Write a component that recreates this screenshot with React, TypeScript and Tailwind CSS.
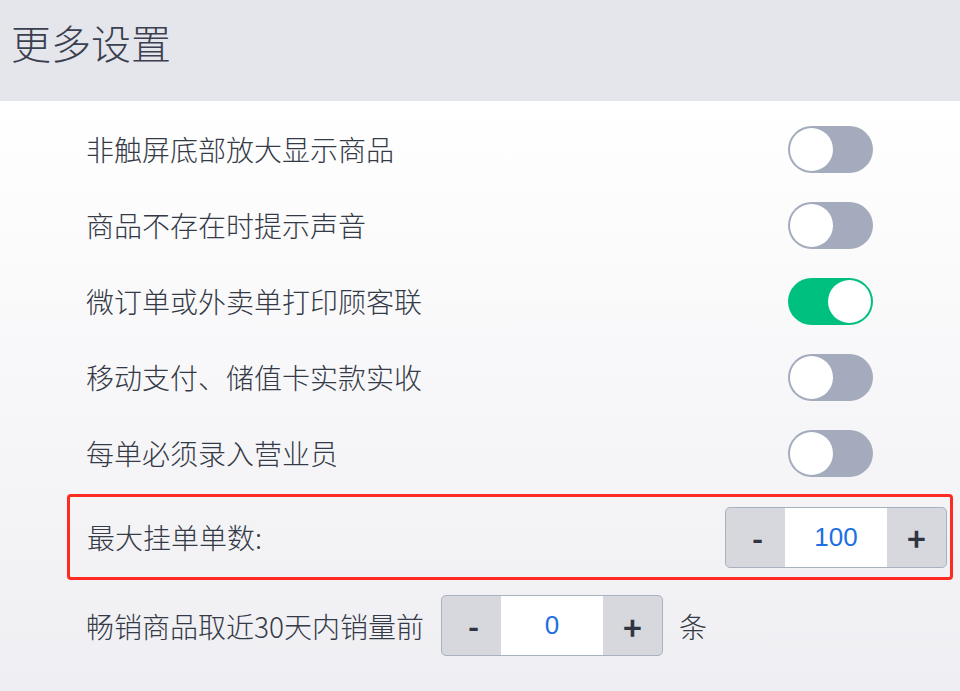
import React, { useState } from "react";

function Toggle({ on }: { on: boolean }) {
  return (
    <div
      className={
        "relative h-[47px] w-[85px] rounded-full " +
        (on ? "bg-[#00c07f]" : "bg-[#a3abbd]")
      }
    >
      <div
        className={
          "absolute top-[2px] h-[43px] w-[43px] rounded-full bg-white " +
          (on ? "left-[40px]" : "left-[2px]")
        }
      />
    </div>
  );
}

function Stepper({ value }: { value: string }) {
  return (
    <div className="flex h-[61px] w-[222px] overflow-hidden rounded-[5px] border border-[#a9b0c0] bg-[#d7d8dd]">
      <div className="flex w-[59px] items-center justify-center pl-[4px] text-[30px] font-semibold text-[#2f3542]">
        -
      </div>
      <div className="flex w-[102px] items-center justify-center bg-white text-[26px] text-[#1d6fe3] [font-family:'Liberation_Sans',sans-serif]">
        {value}
      </div>
      <div className="flex flex-1 items-center justify-center text-[32px] font-bold text-[#2f3542]">
        +
      </div>
    </div>
  );
}

export default function App() {
  const rows: [string, boolean][] = [
    ["非触屏底部放大显示商品", false],
    ["商品不存在时提示声音", false],
    ["微订单或外卖单打印顾客联", true],
    ["移动支付、储值卡实款实收", false],
    ["每单必须录入营业员", false],
  ];
  const [state] = useState(rows);
  return (
    <div className="flex h-[691px] w-[960px] flex-col overflow-hidden [font-family:'Noto_Sans_CJK_SC','Noto_Sans',sans-serif] text-[#353a47]">
      <div className="flex h-[101px] shrink-0 items-start bg-[#e5e6eb] pl-[11px] pt-[22px]">
        <h1 className="text-[40px] leading-[40px] font-light text-[#3b4050]">更多设置</h1>
      </div>
      <div className="flex flex-1 flex-col bg-gradient-to-b from-[#ffffff] to-[#efeff3] pt-[10px]">
        {state.map(([label, on]) => (
          <div
            key={label}
            className="flex h-[76px] items-center justify-between pl-[86px] pr-[87px]"
          >
            <span className="text-[28px] font-light">{label}</span>
            <Toggle on={on} />
          </div>
        ))}
        <div className="ml-[67px] mr-[7px] mt-[3px] flex h-[86px] items-center justify-between rounded-[4px] border-[3px] border-[#ff2b22] pl-[17px] pr-[3px]">
          <span className="text-[28px] font-light">最大挂单单数:</span>
          <Stepper value="100" />
        </div>
        <div className="mt-[15px] flex items-center pl-[86px]">
          <span className="text-[28px] font-light">畅销商品取近30天内销量前</span>
          <div className="ml-[17px]">
            <Stepper value="0" />
          </div>
          <span className="ml-[16px] text-[28px] font-light">条</span>
        </div>
      </div>
    </div>
  );
}
